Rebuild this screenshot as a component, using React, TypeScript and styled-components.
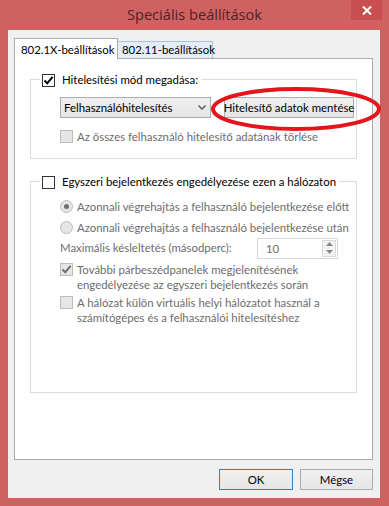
import React from 'react';
import styled, { createGlobalStyle } from 'styled-components';

const GlobalStyle = createGlobalStyle`
  body {
    margin: 0;
    font-family: Lato, "Liberation Sans", sans-serif;
  }
`

const Window = styled.div`
  position: relative;
  width: 389px;
  height: 506px;
  background: #cf6261;
  display: flex;
  flex-direction: column;
  box-sizing: border-box;
  font-size: 11.4px;
  color: #000;
`

const TitleBar = styled.div`
  height: 30px;
  display: flex;
  align-items: flex-start;
  position: relative;
`

const Title = styled.div`
  flex: 1;
  text-align: center;
  font-family: "Open Sans", sans-serif;
  font-size: 14.6px;
  line-height: 28px;
  color: #4f2121;
`

const CloseButton = styled.div`
  position: absolute;
  right: 7px;
  top: 0;
  width: 31px;
  height: 20px;
  background: #c74f4f;
  display: flex;
  align-items: center;
  justify-content: center;
`

const Client = styled.div`
  flex: 1;
  margin: 0 9px 8px 8px;
  background: #f0f0f0;
  padding: 8px 7px 8px 6px;
  display: flex;
  flex-direction: column;
`

const TabStrip = styled.div`
  height: 20px;
  display: flex;
  align-items: flex-end;
  position: relative;
  z-index: 1;
`

const Tab = styled.div<{ $active?: boolean; $width: number }>`
  box-sizing: border-box;
  width: ${p => p.$width}px;
  height: ${p => (p.$active ? '21px' : '17px')};
  margin-bottom: ${p => (p.$active ? '-1px' : '0')};
  padding: ${p => (p.$active ? '3px 0 0 6px' : '0 0 0 4px')};
  background: ${p => (p.$active ? '#fff' : '#e5eef8')};
  border: 1px solid ${p => (p.$active ? '#acacac' : '#a7c1df')};
  border-bottom: none;
  line-height: 15px;
  white-space: nowrap;
  & + & {
    border-left: none;
  }
`

const TabPanel = styled.div`
  flex: 1;
  background: #fff;
  border: 1px solid #acacac;
  padding: 13px 15px 0 15px;
  display: flex;
  flex-direction: column;
  gap: 15px;
`

const Group = styled.fieldset`
  margin: 0;
  padding: 0;
  border: 1px solid #dcdcdc;
  min-width: 0;
`

const GroupTitle = styled.legend`
  margin-left: 9px;
  padding: 0 3px 0 2px;
  display: flex;
  align-items: center;
  gap: 3px;
  line-height: 15px;
`

const GroupBody = styled.div<{ $pad: string }>`
  padding: ${p => p.$pad};
  display: flex;
  flex-direction: column;
`

const Row = styled.div<{ $top: number }>`
  display: flex;
  align-items: flex-start;
  margin-top: ${p => p.$top}px;
`

const Label = styled.span<{ $disabled?: boolean }>`
  line-height: 15.5px;
  white-space: nowrap;
  color: ${p => (p.$disabled ? '#6d6d6d' : '#000')};
`

const BoxMark = styled.span<{ $disabled?: boolean }>`
  flex: none;
  width: 13px;
  height: 13px;
  box-sizing: border-box;
  border: 1px solid ${p => (p.$disabled ? '#bcbcbc' : '#333')};
  background: ${p => (p.$disabled ? '#e6e6e6' : '#fff')};
  margin: 1px 4px 0 0;
  display: flex;
  align-items: center;
  justify-content: center;
`

const RadioMark = styled(BoxMark)`
  border-radius: 50%;
`

const Dot = styled.span`
  width: 5px;
  height: 5px;
  border-radius: 50%;
  background: #6d6d6d;
`

const Select = styled.div`
  box-sizing: border-box;
  width: 151px;
  height: 21px;
  border: 1px solid #acacac;
  background: linear-gradient(#f0f0f0, #e5e5e5);
  display: flex;
  align-items: center;
  justify-content: space-between;
  padding: 0 4px 0 3px;
`

const PushButton = styled.div<{ $default?: boolean; $width: number }>`
  box-sizing: border-box;
  width: ${p => p.$width}px;
  height: 21px;
  border: 1px solid ${p => (p.$default ? '#3c7fb1' : '#acacac')};
  background: linear-gradient(#f0f0f0, #e5e5e5);
  display: flex;
  align-items: center;
  justify-content: center;
  white-space: nowrap;
`

const DelayRow = styled.div`
  display: flex;
  align-items: center;
  margin-top: 2px;
  height: 21px;
`

const Spin = styled.div`
  box-sizing: border-box;
  margin-left: auto;
  margin-right: 18px;
  width: 81px;
  height: 21px;
  border: 1px solid #d9d9d9;
  background: #fff;
  display: flex;
  align-items: center;
  padding: 1px 1px 1px 8px;
  color: #6d6d6d;
`

const SpinArrows = styled.div`
  margin-left: auto;
  width: 14px;
  height: 17px;
  border: 1px solid #d9d9d9;
  box-sizing: border-box;
  background: #f3f3f3;
  display: flex;
  flex-direction: column;
  align-items: center;
  justify-content: space-around;
`

const ButtonRow = styled.div`
  display: flex;
  justify-content: flex-end;
  gap: 7px;
  margin-top: 9px;
`

const Annotation = styled.svg`
  position: absolute;
  left: 210px;
  top: 85px;
  pointer-events: none;
`

const Check = ({ color }: { color: string }) => (
  <svg width="11" height="11" viewBox="0 0 11 11">
    <path d="M1.5 5.5 L4.2 8.3 L9.6 1.8" fill="none" stroke={color} strokeWidth="2" />
  </svg>
)

const Checkbox = ({ checked, disabled }: { checked?: boolean; disabled?: boolean }) => (
  <BoxMark $disabled={disabled}>
    {checked && <Check color={disabled ? '#6d6d6d' : '#000'} />}
  </BoxMark>
)

const App: React.FC = () => {
  return (
    <Window>
      <GlobalStyle />
      <TitleBar>
        <Title>Speciális beállítások</Title>
        <CloseButton>
          <svg width="10" height="9" viewBox="0 0 10 9">
            <path d="M1 0.5 L9 8.5 M9 0.5 L1 8.5" stroke="#fff" strokeWidth="2" />
          </svg>
        </CloseButton>
      </TitleBar>
      <Client>
        <TabStrip>
          <Tab $active $width={104}>802.1X-beállítások</Tab>
          <Tab $width={95}>802.11-beállítások</Tab>
        </TabStrip>
        <TabPanel>
          <Group>
            <GroupTitle>
              <Checkbox checked />
              <Label>Hitelesítési mód megadása:</Label>
            </GroupTitle>
            <GroupBody $pad="0 0 14px 29px">
              <Row $top={9}>
                <Select>
                  <span>Felhasználóhitelesítés</span>
                  <svg width="8" height="5" viewBox="0 0 8 5">
                    <path d="M0.5 0.5 L4 4 L7.5 0.5" fill="none" stroke="#555" strokeWidth="1.3" />
                  </svg>
                </Select>
                <PushButton $width={130} style={{ marginLeft: 13 }}>
                  Hitelesítő adatok mentése
                </PushButton>
              </Row>
              <Row $top={11}>
                <Checkbox disabled />
                <Label $disabled>Az összes felhasználó hitelesítő adatának törlése</Label>
              </Row>
            </GroupBody>
          </Group>
          <Group>
            <GroupTitle>
              <Checkbox />
              <Label>Egyszeri bejelentkezés engedélyezése ezen a hálózaton</Label>
            </GroupTitle>
            <GroupBody $pad="0 0 66px 29px">
              <Row $top={9}>
                <RadioMark $disabled>
                  <Dot />
                </RadioMark>
                <Label $disabled>Azonnali végrehajtás a felhasználó bejelentkezése előtt</Label>
              </Row>
              <Row $top={6}>
                <RadioMark $disabled />
                <Label $disabled>Azonnali végrehajtás a felhasználó bejelentkezése után</Label>
              </Row>
              <DelayRow>
                <Label $disabled>Maximális késleltetés (másodperc):</Label>
                <Spin>
                  10
                  <SpinArrows>
                    <svg width="7" height="4" viewBox="0 0 7 4">
                      <path d="M0 4 L3.5 0 L7 4 Z" fill="#888" />
                    </svg>
                    <svg width="7" height="4" viewBox="0 0 7 4">
                      <path d="M0 0 L3.5 4 L7 0 Z" fill="#888" />
                    </svg>
                  </SpinArrows>
                </Spin>
              </DelayRow>
              <Row $top={3}>
                <Checkbox checked disabled />
                <Label $disabled>
                  További párbeszédpanelek megjelenítésének
                  <br />
                  engedélyezése az egyszeri bejelentkezés során
                </Label>
              </Row>
              <Row $top={2}>
                <Checkbox disabled />
                <Label $disabled>
                  A hálózat külön virtuális helyi hálózatot használ a
                  <br />
                  számítógépes és a felhasználói hitelesítéshez
                </Label>
              </Row>
            </GroupBody>
          </Group>
        </TabPanel>
        <ButtonRow>
          <PushButton $default $width={74}>OK</PushButton>
          <PushButton $width={73}>Mégse</PushButton>
        </ButtonRow>
      </Client>
      <Annotation width="176" height="48" viewBox="0 0 176 48">
        <ellipse cx="86" cy="24" rx="83" ry="20" fill="none" stroke="#e3161c" strokeWidth="4" />
      </Annotation>
    </Window>
  );
};

export default App;
